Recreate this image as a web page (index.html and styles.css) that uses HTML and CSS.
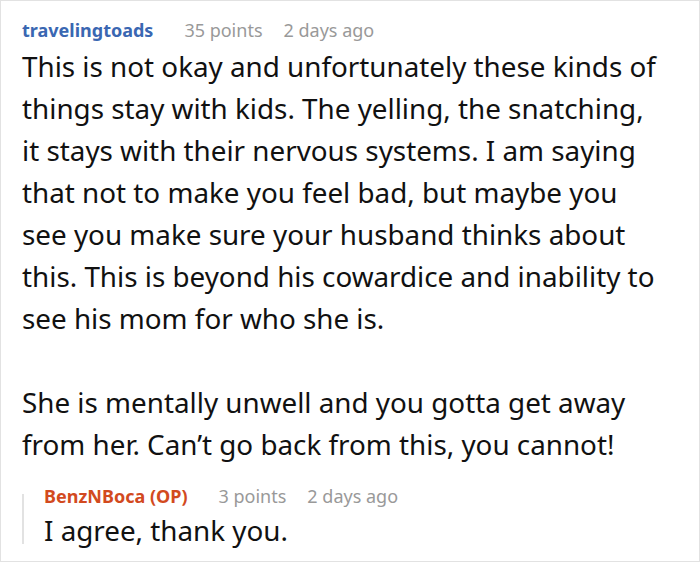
FILE: index.html
```html
<!DOCTYPE html>
<html>
<head>
<meta charset="utf-8">
<link rel="stylesheet" href="styles.css">
</head>
<body>
<div class="comment">
  <div class="meta">
    <span class="author">travelingtoads</span>
    <span class="points">35 points</span>
    <span class="date">2 days ago</span>
  </div>
  <div class="text">
    <p>This is not okay and unfortunately these kinds of<br>things stay with kids. The yelling, the snatching,<br>it stays with their nervous systems. I am saying<br>that not to make you feel bad, but maybe you<br>see you make sure your husband thinks about<br>this. This is beyond his cowardice and inability to<br>see his mom for who she is.</p>
    <p>She is mentally unwell and you gotta get away<br>from her. Can’t go back from this, you cannot!</p>
  </div>
  <div class="reply">
    <div class="meta">
      <span class="author op">BenzNBoca (OP)</span>
      <span class="points">3 points</span>
      <span class="date">2 days ago</span>
    </div>
    <div class="text">
      <p>I agree, thank you.</p>
    </div>
  </div>
</div>
</body>
</html>
```

FILE: styles.css
```css
html, body {
  margin: 0;
  padding: 0;
  background: #fff;
}
.comment {
  box-sizing: border-box;
  width: 700px;
  height: 562px;
  border: 1px solid #e2e2e2;
  padding: 17px 0 0 21px;
  font-family: "Noto Sans", "Open Sans", sans-serif;
  color: #111;
  overflow: hidden;
}
.meta {
  display: flex;
  align-items: baseline;
  font-size: 18px;
  line-height: 24px;
  height: 24px;
}
.author {
  font-weight: 700;
  color: #3a67b2;
}
.author.op {
  color: #d24a1e;
}
.points {
  color: #999;
  margin-left: 31px;
}
.date {
  color: #999;
  margin-left: 21px;
}
.text {
  font-size: 27.8px;
  line-height: 42px;
  margin-top: 3px;
  white-space: nowrap;
}
.text p {
  margin: 0 0 42px;
}
.text p:last-child {
  margin-bottom: 0;
}
.reply {
  position: relative;
  margin-top: 19px;
  padding-left: 22px;
}
.reply::before {
  content: "";
  position: absolute;
  left: 0;
  top: 10px;
  bottom: 7px;
  width: 2px;
  background: #e2e2e2;
}
.reply .text {
  margin-top: 1px;
}
```
